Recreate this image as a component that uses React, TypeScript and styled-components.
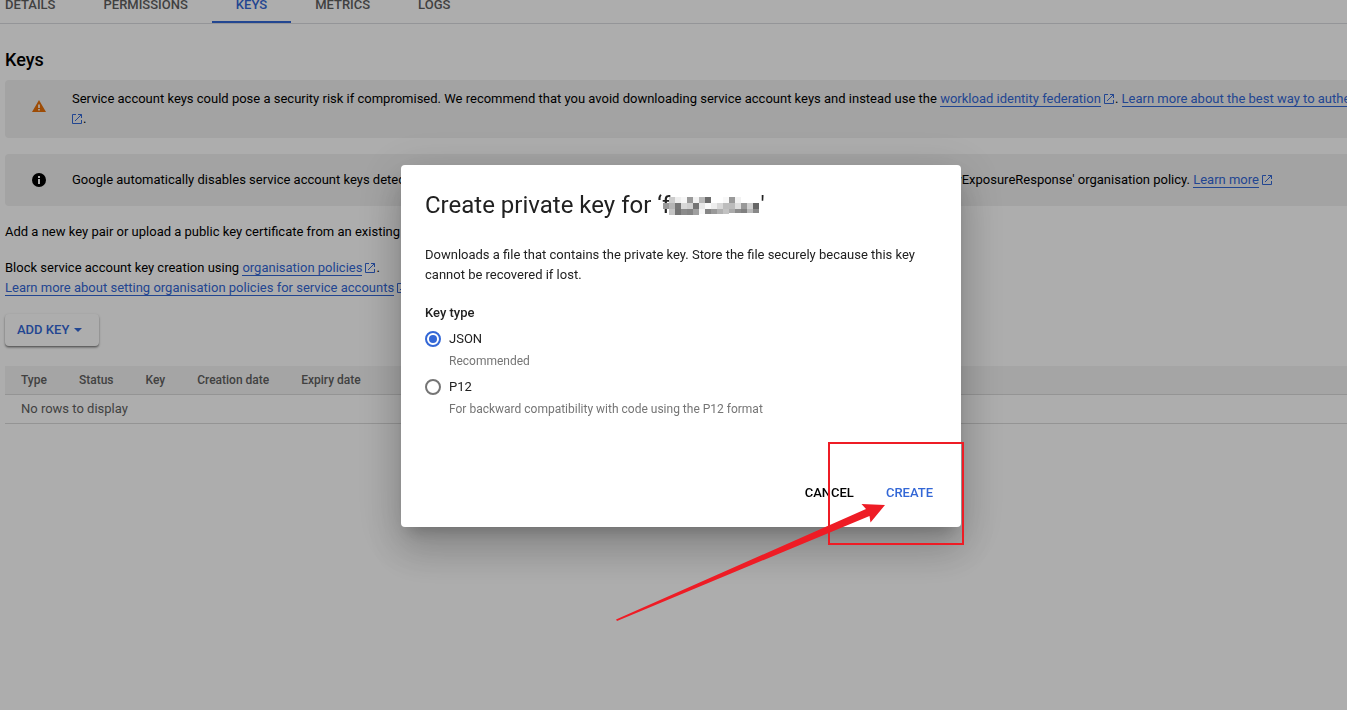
import React from "react";
import styled, { createGlobalStyle } from "styled-components";

const GlobalStyle = createGlobalStyle`
  *, *::before, *::after { box-sizing: border-box; }
  body { margin: 0; background: #fff; font: 400 13px/20px Roboto, "Liberation Sans", sans-serif; color: #000; }
  h1, h2, p, fieldset { margin: 0; padding: 0; border: 0; }
  button, input { font: inherit; }
`;

const BLUE = "#3367d6";
const RED = "#ee1c25";

const Page = styled.div`
  min-height: 100vh;
  overflow: hidden;
`;

const Tabs = styled.nav`
  display: flex;
  height: 24px;
  padding-left: 5px;
  border-bottom: 1px solid #dadce0;
`;

const Tab = styled.a<{ $active?: boolean }>`
  height: 23px;
  padding: 0 24px;
  line-height: 10px;
  font-weight: 500;
  text-decoration: none;
  color: ${(p) => (p.$active ? BLUE : "#5f5f5f")};
  border-bottom: 2px solid ${(p) => (p.$active ? BLUE : "transparent")};
  &:first-child { padding-left: 0; }
`;

const Content = styled.main`
  margin-right: -300px;
  padding: 24px 0 0 5px;
`;

const Heading = styled.h1`
  font-size: 18px;
  line-height: 24px;
  font-weight: 500;
  margin-bottom: 8px;
`;

const Notice = styled.section`
  display: flex;
  align-items: center;
  gap: 26px;
  min-height: 52px;
  margin-bottom: 16px;
  padding: 9px 27px;
  border-radius: 4px;
  background: #f1f1f1;
  > svg { flex: none; }
`;

const Link = styled.a`
  color: ${BLUE};
  text-decoration: none;
  white-space: nowrap;
  border-bottom: 1px solid ${BLUE};
`;

const Paragraph = styled.p`
  margin-bottom: 16px;
`;

const OpenIcon = styled.svg`
  width: 10px;
  height: 10px;
  margin-right: 1px;
  vertical-align: -1px;
  fill: none;
  stroke: ${BLUE};
  ${Link} + & { margin-left: 3px; }
`;

const AddButton = styled.button`
  display: flex;
  align-items: center;
  gap: 5px;
  height: 32px;
  margin-bottom: 20px;
  padding: 0 17px 0 12px;
  border: 0;
  border-radius: 4px;
  background: #fff;
  color: ${BLUE};
  font-weight: 500;
  box-shadow: 0 1px 3px rgba(0, 0, 0, 0.2), 0 2px 2px rgba(0, 0, 0, 0.2), 0 1px 1px rgba(0, 0, 0, 0.2);
`;

const KeyTable = styled.table`
  width: 100%;
  border-collapse: collapse;
  color: #616161;
  text-align: left;
  tr { border-bottom: 1px solid #dadada; }
  th, td { height: 29px; padding: 0 16px; white-space: nowrap; }
  th { height: 28px; background: #f4f4f4; font-size: 12px; font-weight: 500; }
  th:last-child { width: 100%; }
`;

const Overlay = styled.div`
  position: fixed;
  inset: 0;
  display: flex;
  align-items: center;
  justify-content: center;
  padding: 0 0 18px 15px;
  background: rgba(0, 0, 0, 0.32);
`;

const Dialog = styled.section`
  position: relative;
  width: 560px;
  padding: 24px 12px 16px 24px;
  border-radius: 4px;
  background: #fff;
  color: #212121;
  box-shadow: 0 11px 15px -7px rgba(0, 0, 0, 0.2), 0 24px 38px 3px rgba(0, 0, 0, 0.14),
    0 9px 46px 8px rgba(0, 0, 0, 0.12);
`;

const DialogTitle = styled.h2`
  font-size: 24px;
  line-height: 32px;
  font-weight: 400;
  margin-bottom: 24px;
`;

const Redaction = styled.svg`
  width: 102px;
  height: 18px;
  margin-left: -7px;
  margin-right: -5px;
  vertical-align: -2px;
`;

const DialogText = styled.p`
  padding-right: 12px;
  margin-bottom: 18px;
`;

const Legend = styled.legend`
  padding: 0;
  margin-bottom: 6px;
  font-weight: 500;
`;

const Option = styled.div`
  display: grid;
  grid-template-columns: 16px 1fr;
  column-gap: 8px;
  row-gap: 2px;
  align-items: center;
  margin-bottom: 6px;
`;

const Radio = styled.input`
  appearance: none;
  display: grid;
  place-content: center;
  width: 16px;
  height: 16px;
  margin: 0;
  border: 2px solid #757575;
  border-radius: 50%;
  &:checked { border-color: ${BLUE}; }
  &:checked::before {
    content: "";
    width: 8px;
    height: 8px;
    border-radius: 50%;
    background: ${BLUE};
  }
`;

const Hint = styled.span`
  grid-column: 2;
  font-size: 12px;
  color: #757575;
`;

const Actions = styled.footer`
  display: flex;
  justify-content: flex-end;
  margin-top: 50px;
`;

const Action = styled.button<{ $primary?: boolean }>`
  height: 36px;
  padding: 0 16px;
  border: 0;
  background: transparent;
  font-weight: 500;
  color: ${(p) => (p.$primary ? BLUE : "#000")};
`;

const Highlight = styled.div`
  position: absolute;
  right: -3px;
  bottom: -18px;
  width: 136px;
  height: 103px;
  border: 2px solid ${RED};
  pointer-events: none;
`;

const Arrow = styled.svg`
  position: absolute;
  left: 215px;
  top: 335px;
  width: 270px;
  height: 122px;
  fill: ${RED};
  pointer-events: none;
`;

const External = () => (
  <OpenIcon viewBox="0 0 10 10" aria-hidden="true">
    <path d="M4 0.5H0.5V9.5H9.5V6M6 0.5H9.5V4M9.5 0.5L3 7" />
  </OpenIcon>
);

/* Grey levels of the 6px mosaic over the account name; null leaves a cell empty. */
const mosaic: (string | null)[][] = [
  [null, "#ccc", "#eee", "#f7f7f7", "#999", "#f2f2f2", "#b8b8b8", "#6c6c6c", null, null, "#f8f8f8", "#999", "#f2f2f2", null, null, null],
  ["#999", "#b5b5b5", "#777", "#d8d8d8", "#d0d0d0", "#747474", "#e8e8e8", "#fafafa", "#eee", "#d8d8d8", "#bdbdbd", "#bbb", "#ddd", "#999", "#d0d0d0", "#666"],
  [null, "#c4c4c4", "#747474", "#8b8b8b", "#858585", "#a0a0a0", "#f5f5f5", "#858585", "#999", "#b0b0b0", "#c2c2c2", "#aaa", "#8c8c8c", "#808080", "#b8b8b8", "#888"],
];

const columns = ["Type", "Status", "Key", "Creation date", "Expiry date"];

export default function App() {
  return (
    <>
      <GlobalStyle />
      <Page>
        <Tabs>
          <Tab href="#details">DETAILS</Tab>
          <Tab href="#permissions">PERMISSIONS</Tab>
          <Tab href="#keys" $active>KEYS</Tab>
          <Tab href="#metrics">METRICS</Tab>
          <Tab href="#logs">LOGS</Tab>
        </Tabs>
        <Content>
          <Heading>Keys</Heading>
          <Notice>
            <svg width="14" height="20" viewBox="0 0 14 20" aria-hidden="true">
              <path d="M7 1L14 13H0Z" fill="#e8710a" />
              <path d="M6.2 5.5H7.8V9H6.2ZM6.2 10H7.8V11.5H6.2Z" fill="#fff" />
            </svg>
            <p>
              Service account keys could pose a security risk if compromised. We recommend that you avoid
              downloading service account keys and instead use the{" "}
              <Link href="#federation">workload identity federation</Link>
              <External />.{" "}
              <Link href="#authenticate">
                Learn more about the best way to authenticate service accounts on Google Cloud
              </Link>
              <br />
              <External />.
            </p>
          </Notice>
          <Notice>
            <svg width="14" height="14" viewBox="0 0 14 14" aria-hidden="true">
              <circle cx="7" cy="7" r="7" fill="#000" />
              <path d="M6 3H8V5H6ZM6 6H8V11H6Z" fill="#fff" />
            </svg>
            <p>
              Google automatically disables service account keys detected in public repositories. You can
              customise this behaviour by using the 'iam.serviceAccountKeyExposureResponse' organisation
              policy. <Link href="#exposure">Learn more</Link>
              <External />
            </p>
          </Notice>
          <Paragraph>Add a new key pair or upload a public key certificate from an existing key pair.</Paragraph>
          <Paragraph>
            Block service account key creation using <Link href="#policies">organisation policies</Link>
            <External />.
            <br />
            <Link href="#setting">Learn more about setting organisation policies for service accounts</Link>
            <External />
          </Paragraph>
          <AddButton type="button">
            ADD KEY
            <svg width="8" height="4" viewBox="0 0 8 4" fill="currentColor" aria-hidden="true">
              <path d="M0 0H8L4 4Z" />
            </svg>
          </AddButton>
          <KeyTable>
            <thead>
              <tr>
                {columns.map((c) => (
                  <th key={c} scope="col">{c}</th>
                ))}
              </tr>
            </thead>
            <tbody>
              <tr>
                <td colSpan={5}>No rows to display</td>
              </tr>
            </tbody>
          </KeyTable>
        </Content>
      </Page>
      <Overlay>
        <Dialog role="dialog" aria-modal="true" aria-labelledby="dialog-title">
          <DialogTitle id="dialog-title">
            Create private key for ‘f
            <Redaction viewBox="0 0 102 18" shapeRendering="crispEdges" aria-hidden="true">
              {mosaic.map((row, y) =>
                row.map(
                  (fill, x) =>
                    fill && (
                      <rect
                        key={`${x}-${y}`}
                        x={x * 6}
                        y={y * 6}
                        width="6"
                        height={y === 2 && x > 5 ? (x < 11 ? 5 : 4) : 6}
                        fill={fill}
                      />
                    )
                )
              )}
            </Redaction>
            '
          </DialogTitle>
          <DialogText>
            Downloads a file that contains the private key. Store the file securely because this key cannot be
            recovered if lost.
          </DialogText>
          <fieldset>
            <Legend>Key type</Legend>
            <Option>
              <Radio type="radio" name="key-type" id="json" defaultChecked aria-describedby="json-hint" />
              <label htmlFor="json">JSON</label>
              <Hint id="json-hint">Recommended</Hint>
            </Option>
            <Option>
              <Radio type="radio" name="key-type" id="p12" aria-describedby="p12-hint" />
              <label htmlFor="p12">P12</label>
              <Hint id="p12-hint">For backward compatibility with code using the P12 format</Hint>
            </Option>
          </fieldset>
          <Actions>
            <Action type="button">CANCEL</Action>
            <Action type="button" $primary>CREATE</Action>
          </Actions>
          <Highlight />
          <Arrow viewBox="0 0 270 122" aria-hidden="true">
            <path d="M0 119.5L250 9L245.5 4L269 5L254.5 22.5L253.5 16L1 121Z" />
          </Arrow>
        </Dialog>
      </Overlay>
    </>
  );
}
